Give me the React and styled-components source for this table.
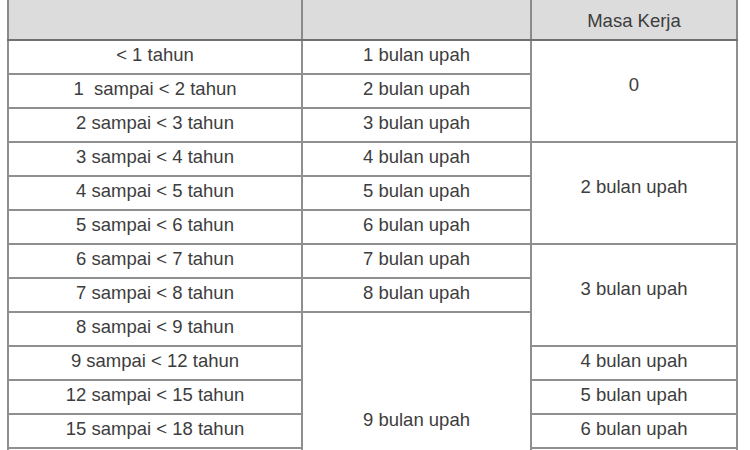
import styled, { createGlobalStyle } from "styled-components";

const GlobalStyle = createGlobalStyle`
	html, body {
		margin: 0;
		padding: 0;
		background: #ffffff;
		overflow: hidden;
	}
	body {
		font-family: "Liberation Sans", Arial, sans-serif;
	}
`;

const rows = [
	{ masa: "< 1 tahun", pesangon: "1 bulan upah", penghargaan: { text: "0", span: 3 } },
	{ masa: "1  sampai < 2 tahun", pesangon: "2 bulan upah" },
	{ masa: "2 sampai < 3 tahun", pesangon: "3 bulan upah" },
	{ masa: "3 sampai < 4 tahun", pesangon: "4 bulan upah", penghargaan: { text: "2 bulan upah", span: 3 } },
	{ masa: "4 sampai < 5 tahun", pesangon: "5 bulan upah" },
	{ masa: "5 sampai < 6 tahun", pesangon: "6 bulan upah" },
	{ masa: "6 sampai < 7 tahun", pesangon: "7 bulan upah", penghargaan: { text: "3 bulan upah", span: 3 } },
	{ masa: "7 sampai < 8 tahun", pesangon: "8 bulan upah" },
	{ masa: "8 sampai < 9 tahun", pesangon: { text: "9 bulan upah", span: 7 } },
	{ masa: "9 sampai < 12 tahun", penghargaan: { text: "4 bulan upah", span: 1 } },
	{ masa: "12 sampai < 15 tahun", penghargaan: { text: "5 bulan upah", span: 1 } },
	{ masa: "15 sampai < 18 tahun", penghargaan: { text: "6 bulan upah", span: 1 } },
	{ masa: "18 sampai < 21 tahun", penghargaan: { text: "7 bulan upah", span: 1 } },
	{ masa: "21 sampai < 24 tahun", penghargaan: { text: "8 bulan upah", span: 1 } },
	{ masa: "24 tahun atau lebih", penghargaan: { text: "10 bulan upah", span: 1 } },
];

const App = () => {
	return (
		<>
			<GlobalStyle />
			<Page>
				<Table>
					<colgroup>
						<col style={{ width: 294 }} />
						<col style={{ width: 229 }} />
						<col style={{ width: 206 }} />
					</colgroup>
					<thead>
						<tr>
							<HeadCell>Masa Kerja</HeadCell>
							<HeadCell>Uang Pesangon</HeadCell>
							<HeadCell $tall>
								Uang
								<br />
								Penghargaan
								<br />
								Masa Kerja
							</HeadCell>
						</tr>
					</thead>
					<tbody>
						{rows.map((row, i) => (
							<tr key={i}>
								<Cell>{row.masa}</Cell>
								{typeof row.pesangon === "string" && <Cell>{row.pesangon}</Cell>}
								{row.pesangon && typeof row.pesangon === "object" && (
									<Cell rowSpan={row.pesangon.span} $lift={18}>
										{row.pesangon.text}
									</Cell>
								)}
								{row.penghargaan && (
									<Cell
										rowSpan={row.penghargaan.span}
										$lift={row.penghargaan.span > 1 ? 8 : 0}
									>
										{row.penghargaan.text}
									</Cell>
								)}
							</tr>
						))}
					</tbody>
				</Table>
			</Page>
		</>
	);
};

export default App;

const Page = styled.div`
	padding-left: 7px;
	margin-top: -71px;
`;

const Table = styled.table`
	width: 730px;
	table-layout: fixed;
	border-collapse: collapse;
	color: #3d3d3d;
	font-size: 18.5px;
`;

const HeadCell = styled.th`
	height: 108px;
	padding: 0;
	background: #dcdcdc;
	border: 2px solid #8a8a8a;
	border-bottom-color: #707070;
	font-weight: normal;
	text-align: center;
	vertical-align: middle;
	line-height: ${(p) => (p.$tall ? "36px" : "20px")};
	white-space: nowrap;
`;

const Cell = styled.td`
	height: 28px;
	padding: 0 0 ${(p) => 4 + (p.$lift || 0)}px;
	border: 2px solid #8f8f8f;
	text-align: center;
	vertical-align: middle;
	line-height: 20px;
	white-space: pre;
`;
